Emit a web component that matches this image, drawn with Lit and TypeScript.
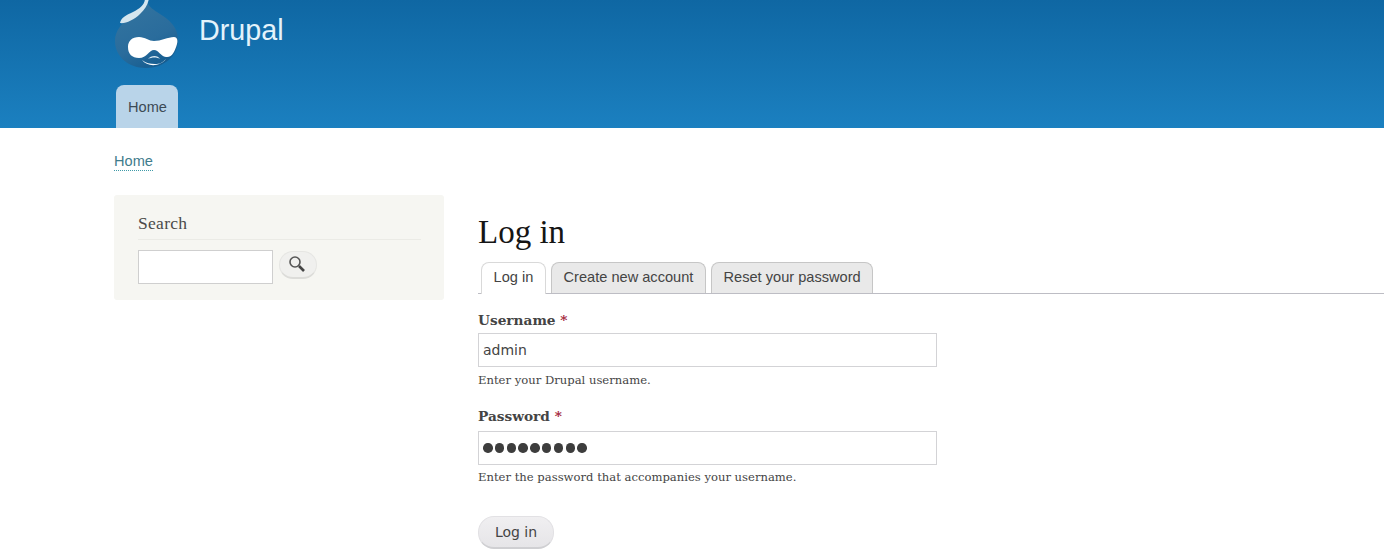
import { LitElement, html, css } from "lit";
import { customElement } from "lit/decorators.js";

@customElement("app-root")
export class AppRoot extends LitElement {
	static styles = css`
		:host {
			display: block;
			height: 557px;
			overflow: hidden;
			background: #fff;
			font-family: "Liberation Sans", Arial, sans-serif;
			color: #3b3b3b;
		}

		.header {
			height: 128px;
			box-sizing: border-box;
			padding-left: 116px;
			background: linear-gradient(#0f67a3, #1b80c0);
			display: flex;
			flex-direction: column;
			overflow: hidden;
		}

		.brand {
			height: 85px;
			display: flex;
			align-items: flex-start;
		}

		.logo {
			width: 66px;
			height: 72px;
			margin-left: -2px;
			flex: none;
		}

		.site-name {
			margin: 12px 0 0 19px;
			font-size: 28.7px;
			line-height: 36px;
			color: #e4f3fb;
		}

		.nav-tab {
			width: 62px;
			height: 43px;
			box-sizing: border-box;
			padding: 14px 0 0 1px;
			text-align: center;
			font-size: 14.6px;
			line-height: 16px;
			color: #3c4a55;
			background: #b9d4e9;
			border-radius: 8px 8px 0 0;
		}

		.breadcrumb {
			padding: 24px 0 0 114px;
			height: 43px;
			box-sizing: border-box;
			font-size: 14.6px;
			line-height: 17px;
		}

		.breadcrumb a {
			color: #3f7c8c;
			border-bottom: 1px dotted #3f9aa8;
			display: inline-block;
			line-height: 18px;
		}

		.columns {
			display: flex;
			padding: 24px 0 0 114px;
		}

		.sidebar {
			width: 330px;
			height: 105px;
			box-sizing: border-box;
			padding: 18px 23px 0 24px;
			background: #f6f6f2;
			border-radius: 3px;
			flex: none;
		}

		.sidebar h2 {
			margin: 0;
			font: 400 17.5px/20px "Liberation Serif", "DejaVu Serif", serif;
			letter-spacing: 0.3px;
			color: #4a4a4a;
			padding-bottom: 6px;
			border-bottom: 1px solid #ebebe6;
		}

		.search-row {
			display: flex;
			align-items: flex-start;
			margin-top: 10px;
		}

		.search-input {
			width: 135px;
			height: 34px;
			box-sizing: border-box;
			background: #fff;
			border: 1px solid #cfcfcf;
		}

		.search-btn {
			width: 38px;
			height: 28px;
			margin: 1px 0 0 6px;
			box-sizing: border-box;
			border-radius: 14px;
			background: #f0f0ee;
			border: 1px solid #e6e6e3;
			border-bottom: 2px solid #dcdcd9;
			display: flex;
			align-items: center;
			justify-content: center;
		}

		.search-btn svg {
			margin: 0 3px 1px 0;
		}

		.main {
			flex: 1;
			margin-left: 34px;
			min-width: 0;
		}

		h1 {
			margin: 19px 0 0;
			font: 400 33px/36px "Liberation Serif", "DejaVu Serif", serif;
			color: #151515;
		}

		.tabs {
			display: flex;
			gap: 5px;
			margin-top: 12px;
			padding-left: 3px;
			height: 32px;
			box-sizing: border-box;
			border-bottom: 1px solid #bdbdc4;
		}

		.tab {
			height: 31px;
			box-sizing: border-box;
			padding: 6px 11.6px 0;
			font-size: 14.6px;
			line-height: 17px;
			color: #444;
			background: #e9e9e9;
			border: 1px solid #c6c6c6;
			border-bottom: none;
			border-radius: 8px 8px 0 0;
		}

		.tab.active {
			height: 32px;
			background: #fff;
			border-color: #d9d9d9;
		}

		.field {
			margin-top: 17px;
		}

		.field + .field {
			margin-top: 18px;
		}

		label {
			display: block;
			font: 700 13.7px/18px "DejaVu Serif", serif;
			color: #444;
		}

		.req {
			color: #a5283c;
		}

		.text-input {
			width: 459px;
			height: 34px;
			box-sizing: border-box;
			margin-top: 4px;
			padding-left: 4px;
			border: 1px solid #d3d3d6;
			font: 14px/32px "DejaVu Sans", sans-serif;
			color: #444;
		}

		.field + .field .text-input {
			margin-top: 6px;
		}

		.dots {
			display: flex;
			align-items: center;
			gap: 2.3px;
			height: 32px;
		}

		.dots span {
			width: 9.5px;
			height: 9.5px;
			border-radius: 50%;
			background: #3d3d3d;
		}

		.desc {
			margin-top: 4px;
			font: 11.6px/18px "DejaVu Serif", serif;
			color: #444;
		}

		.field + .field .desc {
			margin-top: 3px;
		}

		.submit {
			width: 76px;
			height: 33px;
			margin-top: 30px;
			box-sizing: border-box;
			border-radius: 16px;
			background: linear-gradient(#f0eff1, #e6e5e8);
			border: 1px solid #e2e1e4;
			border-bottom: 2px solid #cfcfd2;
			text-align: center;
			font: 14px/30px "DejaVu Sans", sans-serif;
			color: #444;
		}
	`;

	render() {
		return html`
			<div class="header">
				<div class="brand">
					<svg class="logo" viewBox="0 0 66 72">
						<defs>
							<linearGradient id="drop" x1="0.2" y1="0" x2="0.7" y2="1">
								<stop offset="0" stop-color="#33749f"/>
								<stop offset="0.6" stop-color="#2a6c9c"/>
								<stop offset="1" stop-color="#145c90"/>
							</linearGradient>
						</defs>
						<path d="M33 2C33 8 26 13 17 18C7 23 1 31 1 41C1 57 15 68 32 68C50 68 64 56 64 40C64 26 54 19 46 14C40 10 35 7 33 2Z" fill="url(#drop)"/>
						<path d="M31 -2C31 4 27 8 19 12C12 15 7 18 6 23C11 24 20 20 26 14C31 9 34 5 35 -2Z" fill="#d5e6ef"/>
						<path d="M14 47C14 41 18 37 25 37C31 37 35 41 40 41C47 41 54 37 60 37C63 37 64 40 63 44C61 51 58 58 52 57C46 56 45 50 40 50C35 50 33 58 25 58C18 58 14 54 14 47Z" fill="#fff"/>
						<path d="M28 60C33 67 46 67 52 59C48 63 46 64 41 64C36 64 32 63 28 60Z" fill="#fff"/>
						<path d="M34 59C37 55 44 55 46 59C43 57 38 57 34 59Z" fill="#dcebf3"/>
					</svg>
					<div class="site-name">Drupal</div>
				</div>
				<div class="nav-tab">Home</div>
			</div>
			<div class="breadcrumb"><a>Home</a></div>
			<div class="columns">
				<div class="sidebar">
					<h2>Search</h2>
					<div class="search-row">
						<div class="search-input"></div>
						<div class="search-btn">
							<svg width="18" height="18" viewBox="0 0 18 18" fill="none">
								<circle cx="7" cy="7" r="5" stroke="#555" stroke-width="1.6"/>
								<path d="M11 11L16 16" stroke="#444" stroke-width="2.6"/>
							</svg>
						</div>
					</div>
				</div>
				<div class="main">
					<h1>Log in</h1>
					<div class="tabs">
						<div class="tab active">Log in</div>
						<div class="tab">Create new account</div>
						<div class="tab">Reset your password</div>
					</div>
					<div class="field">
						<label>Username <span class="req">*</span></label>
						<div class="text-input">admin</div>
						<div class="desc">Enter your Drupal username.</div>
					</div>
					<div class="field">
						<label>Password <span class="req">*</span></label>
						<div class="text-input">
							<div class="dots">
								${Array.from({ length: 9 }, () => html`<span></span>`)}
							</div>
						</div>
						<div class="desc">Enter the password that accompanies your username.</div>
					</div>
					<div class="submit">Log in</div>
				</div>
			</div>
		`;
	}
}
